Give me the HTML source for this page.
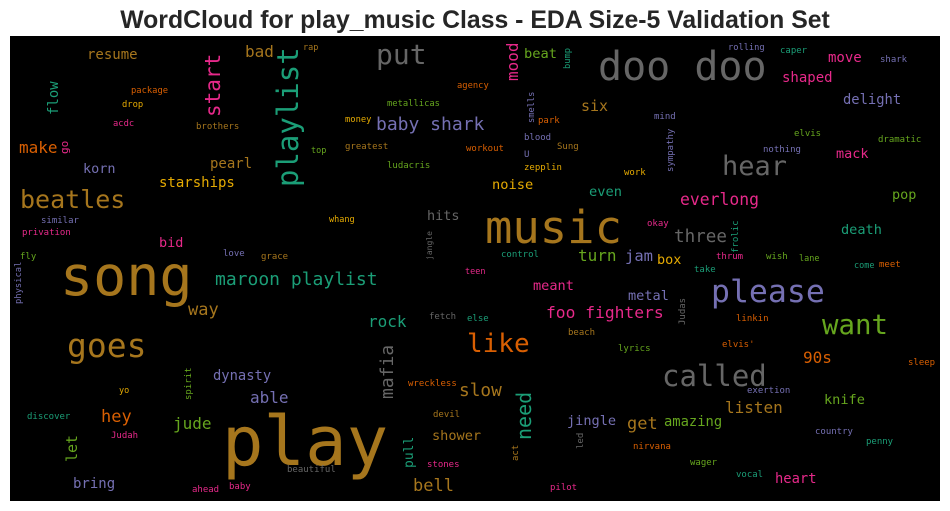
<!DOCTYPE html>
<html><head><meta charset="utf-8"><style>
html,body{margin:0;padding:0;background:#fff;width:950px;height:511px;overflow:hidden}
svg{display:block}
.t{font-family:"Liberation Sans",sans-serif;font-weight:bold;font-size:24.8px;fill:#262626}
.w text{font-family:"DejaVu Sans Mono","Liberation Mono",monospace}
.br{fill:#a6761d}.gy{fill:#666666}.tl{fill:#1b9e77}.pk{fill:#e7298a}.pu{fill:#7570b3}.or{fill:#d95f02}.gr{fill:#66a61e}.ye{fill:#e6ab02}
</style></head><body>
<svg width="950" height="511" viewBox="0 0 950 511" xmlns="http://www.w3.org/2000/svg">
<text class="t" x="475" y="28" text-anchor="middle">WordCloud for play_music Class - EDA Size-5 Validation Set</text>
<rect x="10" y="36" width="930" height="465" fill="#000"/>
<g class="w">
<text class="br" x="60" y="295" font-size="55">song</text>
<text class="br" x="222" y="465" font-size="69">play</text>
<text class="br" x="485" y="243" font-size="45.5">music</text>
<text class="br" x="67" y="357" font-size="33">goes</text>
<text class="br" x="20" y="208" font-size="25">beatles</text>
<text class="gy" x="598" y="80" font-size="40">doo doo</text>
<text class="gy" x="376" y="64" font-size="28">put</text>
<text class="gy" x="722" y="175" font-size="27">hear</text>
<text class="gy" x="662" y="386" font-size="29">called</text>
<text class="pu" x="711" y="302" font-size="31.5">please</text>
<text class="gr" x="822" y="334" font-size="27.4">want</text>
<text class="or" x="467" y="352" font-size="26">like</text>
<text class="tl" transform="translate(298,187) rotate(-90)" font-size="29">playlist</text>
<text class="pk" transform="translate(220,117) rotate(-90)" font-size="21">start</text>
<text class="br" x="87" y="59" font-size="14">resume</text>
<text class="br" x="245" y="57" font-size="16">bad</text>
<text class="br" x="303" y="50" font-size="8.5">rap</text>
<text class="tl" transform="translate(58,115) rotate(-90)" font-size="14">flow</text>
<text class="or" x="131" y="93" font-size="8.8">package</text>
<text class="ye" x="122" y="107" font-size="8.8">drop</text>
<text class="pk" x="113" y="126" font-size="8.8">acdc</text>
<text class="br" x="196" y="129" font-size="9">brothers</text>
<text class="or" x="19" y="153" font-size="16">make</text>
<text class="pk" transform="translate(68,154) rotate(-90)" font-size="11">go</text>
<text class="pu" x="83" y="173" font-size="13.5">korn</text>
<text class="br" x="210" y="168" font-size="14">pearl</text>
<text class="ye" x="159" y="187" font-size="14">starships</text>
<text class="gr" x="387" y="106" font-size="8.8">metallicas</text>
<text class="or" x="457" y="88" font-size="8.8">agency</text>
<text class="ye" x="345" y="122" font-size="8.8">money</text>
<text class="pu" x="376" y="130" font-size="18">baby shark</text>
<text class="br" x="345" y="149" font-size="9">greatest</text>
<text class="gr" x="311" y="153" font-size="8.5">top</text>
<text class="gr" x="387" y="168" font-size="9">ludacris</text>
<text class="or" x="466" y="151" font-size="9">workout</text>
<text class="ye" x="329" y="222" font-size="8.5">whang</text>
<text class="gy" x="427" y="220" font-size="13.5">hits</text>
<text class="gy" transform="translate(432,260) rotate(-90)" font-size="8">jangle</text>
<text class="pu" x="41" y="223" font-size="9">similar</text>
<text class="pk" x="22" y="235" font-size="9">privation</text>
<text class="pk" x="159" y="247" font-size="13.5">bid</text>
<text class="pu" x="223" y="256" font-size="9">love</text>
<text class="br" x="261" y="259" font-size="9">grace</text>
<text class="gr" x="20" y="259" font-size="9">fly</text>
<text class="pu" transform="translate(21,304) rotate(-90)" font-size="8.8">physical</text>
<text class="pk" transform="translate(518,81) rotate(-90)" font-size="16">mood</text>
<text class="gr" x="524" y="58" font-size="13.7">beat</text>
<text class="tl" transform="translate(570,69) rotate(-90)" font-size="8.7">bump</text>
<text class="pu" x="728" y="50" font-size="8.7">rolling</text>
<text class="tl" x="780" y="53" font-size="9">caper</text>
<text class="pk" x="828" y="62" font-size="14">move</text>
<text class="pu" x="880" y="62" font-size="9">shark</text>
<text class="pk" x="782" y="82" font-size="14">shaped</text>
<text class="pu" x="843" y="104" font-size="13.8">delight</text>
<text class="br" x="581" y="111" font-size="15">six</text>
<text class="pu" transform="translate(534,123) rotate(-90)" font-size="8.7">smells</text>
<text class="or" x="538" y="123" font-size="9">park</text>
<text class="pu" x="654" y="119" font-size="9">mind</text>
<text class="pu" x="524" y="140" font-size="9">blood</text>
<text class="pu" x="524" y="157" font-size="9">U</text>
<text class="br" x="557" y="149" font-size="9">Sung</text>
<text class="pu" transform="translate(673,172) rotate(-90)" font-size="9">sympathy</text>
<text class="gr" x="794" y="136" font-size="9">elvis</text>
<text class="gr" x="878" y="142" font-size="9">dramatic</text>
<text class="pu" x="763" y="152" font-size="9">nothing</text>
<text class="pk" x="836" y="158" font-size="13.5">mack</text>
<text class="ye" x="524" y="170" font-size="9">zepplin</text>
<text class="ye" x="624" y="175" font-size="9">work</text>
<text class="ye" x="492" y="189" font-size="13.7">noise</text>
<text class="tl" x="589" y="196" font-size="13.7">even</text>
<text class="gr" x="892" y="199" font-size="13.5">pop</text>
<text class="pk" x="680" y="205" font-size="16.4">everlong</text>
<text class="pk" x="647" y="226" font-size="9">okay</text>
<text class="gy" x="674" y="242" font-size="17.6">three</text>
<text class="tl" transform="translate(738,253) rotate(-90)" font-size="9">frolic</text>
<text class="tl" x="841" y="234" font-size="13.6">death</text>
<text class="tl" x="501" y="257" font-size="9">control</text>
<text class="gr" x="578" y="261" font-size="16">turn</text>
<text class="pu" x="625" y="261" font-size="15.5">jam</text>
<text class="ye" x="657" y="264" font-size="13.5">box</text>
<text class="pk" x="716" y="259" font-size="9">thrum</text>
<text class="gr" x="766" y="259" font-size="9">wish</text>
<text class="gr" x="799" y="261" font-size="8.5">lane</text>
<text class="tl" x="854" y="268" font-size="8.5">come</text>
<text class="or" x="879" y="267" font-size="9">meet</text>
<text class="tl" x="694" y="272" font-size="9">take</text>
<text class="pk" x="465" y="274" font-size="8.5">teen</text>
<text class="pk" x="533" y="290" font-size="13.6">meant</text>
<text class="pu" x="628" y="300" font-size="13.6">metal</text>
<text class="pk" x="546" y="318" font-size="16.3">foo fighters</text>
<text class="gy" transform="translate(685,325) rotate(-90)" font-size="9">Judas</text>
<text class="or" x="736" y="321" font-size="9">linkin</text>
<text class="tl" x="467" y="321" font-size="9">else</text>
<text class="gy" x="429" y="319" font-size="9">fetch</text>
<text class="br" x="568" y="335" font-size="9">beach</text>
<text class="gr" x="618" y="351" font-size="9">lyrics</text>
<text class="or" x="722" y="347" font-size="9">elvis'</text>
<text class="or" x="803" y="363" font-size="16">90s</text>
<text class="or" x="908" y="365" font-size="9">sleep</text>
<text class="br" x="459" y="396" font-size="17.8">slow</text>
<text class="pu" x="747" y="393" font-size="9">exertion</text>
<text class="tl" transform="translate(531,440) rotate(-90)" font-size="20">need</text>
<text class="gr" x="824" y="404" font-size="13.6">knife</text>
<text class="br" x="725" y="413" font-size="16">listen</text>
<text class="pu" x="567" y="425" font-size="13.6">jingle</text>
<text class="br" x="627" y="429" font-size="17">get</text>
<text class="gr" x="664" y="426" font-size="13.8">amazing</text>
<text class="pu" x="815" y="434" font-size="9">country</text>
<text class="tl" x="866" y="444" font-size="9">penny</text>
<text class="gy" transform="translate(583,449) rotate(-90)" font-size="9">led</text>
<text class="br" transform="translate(518,461) rotate(-90)" font-size="9">act</text>
<text class="or" x="633" y="449" font-size="9">nirvana</text>
<text class="gr" x="690" y="465" font-size="9">wager</text>
<text class="tl" x="736" y="477" font-size="9">vocal</text>
<text class="pk" x="775" y="483" font-size="13.8">heart</text>
<text class="pk" x="550" y="490" font-size="9">pilot</text>
<text class="tl" x="215" y="285" font-size="18">maroon playlist</text>
<text class="br" x="188" y="315" font-size="17">way</text>
<text class="tl" x="368" y="327" font-size="16">rock</text>
<text class="gy" transform="translate(393,399) rotate(-90)" font-size="18">mafia</text>
<text class="pu" x="213" y="380" font-size="13.8">dynasty</text>
<text class="gr" transform="translate(191,400) rotate(-90)" font-size="9">spirit</text>
<text class="or" x="408" y="386" font-size="9">wreckless</text>
<text class="ye" x="119" y="393" font-size="8.5">yo</text>
<text class="pu" x="250" y="403" font-size="16">able</text>
<text class="or" x="101" y="422" font-size="17">hey</text>
<text class="tl" x="27" y="419" font-size="9">discover</text>
<text class="br" x="433" y="417" font-size="9">devil</text>
<text class="gr" x="173" y="429" font-size="16">jude</text>
<text class="br" x="432" y="440" font-size="13.6">shower</text>
<text class="gr" transform="translate(77,462) rotate(-90)" font-size="15">let</text>
<text class="pk" x="111" y="438" font-size="9">Judah</text>
<text class="tl" transform="translate(413,468) rotate(-90)" font-size="13">pull</text>
<text class="pk" x="427" y="467" font-size="9">stones</text>
<text class="gy" x="287" y="472" font-size="9">beautiful</text>
<text class="pu" x="73" y="488" font-size="14">bring</text>
<text class="br" x="413" y="491" font-size="17">bell</text>
<text class="pk" x="192" y="492" font-size="9">ahead</text>
<text class="pk" x="229" y="489" font-size="9">baby</text>
</g>
</svg>
</body></html>
